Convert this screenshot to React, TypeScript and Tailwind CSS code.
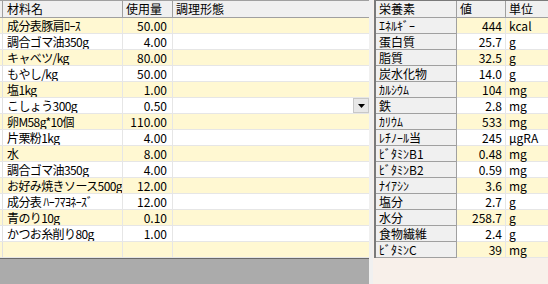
import React from "react";

const font = { fontFamily: '"Noto Sans CJK JP", "Noto Sans", sans-serif' };

const materials: [string, string][] = [
  ["成分表豚肩ﾛｰｽ", "50.00"],
  ["調合ゴマ油350g", "4.00"],
  ["キャベツ/kg", "80.00"],
  ["もやし/kg", "50.00"],
  ["塩1kg", "1.00"],
  ["こしょう300g", "0.50"],
  ["卵M58g*10個", "110.00"],
  ["片栗粉1kg", "4.00"],
  ["水", "8.00"],
  ["調合ゴマ油350g", "4.00"],
  ["お好み焼きソース500g", "12.00"],
  ["成分表 ﾊｰﾌﾏﾖﾈｰｽﾞ", "12.00"],
  ["青のり10g", "0.10"],
  ["かつお糸削り80g", "1.00"],
  ["", ""],
];

const nutrients: [string, string, string][] = [
  ["ｴﾈﾙｷﾞｰ", "444", "kcal"],
  ["蛋白質", "25.7", "g"],
  ["脂質", "32.5", "g"],
  ["炭水化物", "14.0", "g"],
  ["ｶﾙｼｳﾑ", "104", "mg"],
  ["鉄", "2.8", "mg"],
  ["ｶﾘｳﾑ", "533", "mg"],
  ["ﾚﾁﾉｰﾙ当", "245", "μgRA"],
  ["ﾋﾞﾀﾐﾝB1", "0.48", "mg"],
  ["ﾋﾞﾀﾐﾝB2", "0.59", "mg"],
  ["ﾅｲｱｼﾝ", "3.6", "mg"],
  ["塩分", "2.7", "g"],
  ["水分", "258.7", "g"],
  ["食物繊維", "2.4", "g"],
  ["ﾋﾞﾀﾐﾝC", "39", "mg"],
];

export default function App() {
  return (
    <div
      className="flex w-[548px] h-[284px] overflow-hidden text-[12px] leading-[15px] text-black bg-[#f8f0ea]"
      style={font}
    >
      {/* materials grid */}
      <div className="flex flex-col w-[369px] shrink-0 bg-[#ababab]">
        <div className="flex h-[18px] bg-[#f0f0f0] border-t border-b border-[#a0a0a0]">
          <div className="w-[3px] border-r border-[#a0a0a0]" />
          <div className="w-[120px] pl-[4px] border-r border-[#a0a0a0]">材料名</div>
          <div className="w-[50px] pl-[3px] border-r border-[#a0a0a0]">使用量</div>
          <div className="flex-1 pl-[3px]">調理形態</div>
        </div>
        {materials.map(([name, qty], i) => (
          <div
            key={i}
            className={`flex h-[16px] border-b border-[#e6e6e6] ${i % 2 === 0 ? "bg-[#fff8d2]" : "bg-white"}`}
          >
            <div className="w-[3px] border-r border-[#e0e0e0]" />
            <div className="w-[120px] pl-[4px] tracking-[-0.6px] border-r border-[#e6e6e6] whitespace-nowrap overflow-hidden">
              {name}
            </div>
            <div className="w-[50px] pr-[5px] text-right border-r border-[#e6e6e6]">{qty}</div>
            <div className="flex-1 flex justify-end">
              {i === 5 && (
                <div className="w-[16px] h-[15px] bg-[#e8e8e8] border border-[#c8c8c8] flex items-center justify-center">
                  <svg width="7" height="4" viewBox="0 0 7 4">
                    <path d="M0 0h7L3.5 4z" fill="#000" />
                  </svg>
                </div>
              )}
            </div>
          </div>
        ))}
        <div className="border-t border-[#6a6a6a]" />
      </div>

      <div className="w-[4px] shrink-0 bg-[#f0f0f0]" />

      {/* nutrients grid */}
      <div className="flex-1 pl-[1px]">
        <div className="flex flex-col border-l-2 border-t border-[#7a7a7a] w-[176px]">
          <div className="flex h-[17px] bg-[#f0f0f0] border-b border-[#a0a0a0]">
            <div className="w-[81px] pl-[3px] border-r border-[#a0a0a0]">栄養素</div>
            <div className="w-[49px] pl-[3px] border-r border-[#a0a0a0]">値</div>
            <div className="flex-1 pl-[3px]">単位</div>
          </div>
          {nutrients.map(([name, val, unit], i) => (
            <div key={name} className="flex h-[16px]">
              <div className="w-[81px] pl-[3px] bg-[#f0f0f0] border-r border-b border-[#a0a0a0] whitespace-nowrap">
                {name}
              </div>
              <div
                className={`flex flex-1 border-b border-[#e6e6e6] ${i % 2 === 0 ? "bg-[#fff8d2]" : "bg-white"}`}
              >
                <div className="w-[49px] pr-[3px] text-right border-r border-[#e6e6e6]">{val}</div>
                <div className="flex-1 pl-[3px]">{unit}</div>
              </div>
            </div>
          ))}
        </div>
      </div>
    </div>
  );
}
